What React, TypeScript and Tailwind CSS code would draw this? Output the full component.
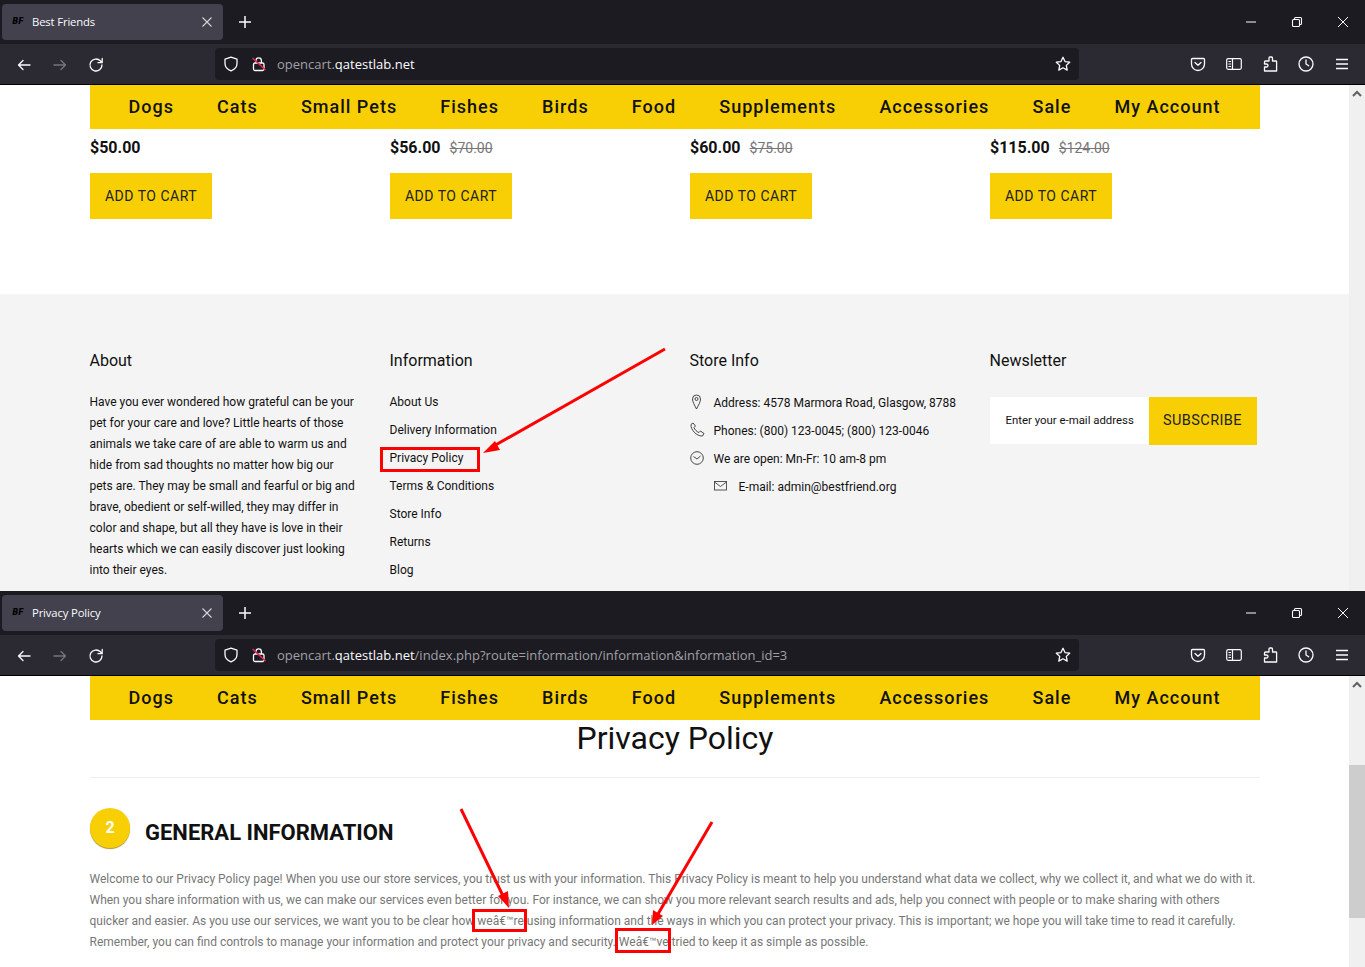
import React from "react";

const Y = "bg-[#f8cf05]";
const roboto = "font-['Roboto',sans-serif]";

function Favicon() {
  return (
    <span className="w-[16px] h-[16px] flex items-center justify-center font-['DejaVu_Sans',sans-serif] text-[8px] font-bold italic text-black tracking-[0px]">
      BF
    </span>
  );
}

function Win({ d, className = "" }: { d: string; className?: string }) {
  return (
    <svg width="16" height="16" viewBox="0 0 16 16" fill="none" stroke="#fbfbfe" strokeWidth="1.3" strokeLinecap="round" strokeLinejoin="round" className={className}>
      <path d={d} />
    </svg>
  );
}

function ChromeBar({ title, path }: { title: string; path?: React.ReactNode }) {
  return (
    <div className="shrink-0 h-[85px] flex flex-col border-b border-black font-['Open_Sans',sans-serif]">
      <div className="h-[44px] bg-[#1c1b22] flex items-center relative">
        <div className="ml-[2px] w-[221px] h-[36px] rounded-[4px] bg-[#42414d] flex items-center pl-[8px] pr-[8px] text-[#fbfbfe] text-[11.3px] tracking-[-0.15px]">
          <Favicon />
          <span className="ml-[6px] flex-1 pt-[1px]">{title}</span>
          <svg width="16" height="16" viewBox="0 0 16 16" fill="none" stroke="#d5d5d8" strokeWidth="1.1"><path d="M3.500 3.500l9 9M12.500 3.500l-9 9" /></svg>
        </div>
        <div className="ml-[14px]">
          <svg width="16" height="16" viewBox="0 0 16 16" fill="none" stroke="#fbfbfe" strokeWidth="1.5"><path d="M8 2v12M2 8h12" /></svg>
        </div>
        <div className="ml-auto flex items-center -mr-[1px]">
          <div className="w-[46px] flex justify-center">
            <svg width="12" height="12" viewBox="0 0 12 12" fill="none" stroke="#fbfbfe" strokeWidth="1"><path d="M1 6h10" /></svg>
          </div>
          <div className="w-[46px] flex justify-center">
            <svg width="12" height="12" viewBox="0 0 12 12" fill="none" stroke="#fbfbfe" strokeWidth="1.1"><rect x="1.5" y="3.5" width="7" height="7" rx="1" /><path d="M3.5 3.500V2.500a1 1 0 0 1 1-1h5a1 1 0 0 1 1 1v5a1 1 0 0 1-1 1h-1" /></svg>
          </div>
          <div className="w-[46px] flex justify-center">
            <svg width="12" height="12" viewBox="0 0 12 12" fill="none" stroke="#fbfbfe" strokeWidth="1"><path d="M1 1l10 10M11 1L1 11" /></svg>
          </div>
        </div>
      </div>
      <div className="h-[40px] bg-[#2b2a33] flex items-center">
        <div className="flex items-center gap-[20px] ml-[16px] w-[199px] pt-[1px]">
          <Win d="M14 8H2.500M7 3.500L2.500 8 7 12.500" />
          <svg width="16" height="16" viewBox="0 0 16 16" fill="none" stroke="#76757c" strokeWidth="1.3" strokeLinecap="round" strokeLinejoin="round"><path d="M2 8h11.500M9 3.500L13.500 8 9 12.500" /></svg>
          <Win d="M14 8a6 6 0 1 1-1.700-4.200L14 5.500M14.200 1.500v4.200H10" />
        </div>
        <div className="w-[864px] h-[32px] rounded-[4px] bg-[#1c1b22] flex items-center pl-[8px] pr-[8px]">
          <svg width="16" height="16" viewBox="0 0 16 16" fill="none" stroke="#fbfbfe" strokeWidth="1.3" strokeLinejoin="round"><path d="M8 1.200l6 2v4.300c0 3.600-2.600 6-6 7.300-3.400-1.300-6-3.700-6-7.300V3.200z" /></svg>
          <svg width="16" height="16" viewBox="0 0 16 16" fill="none" className="ml-[12px]">
            <rect x="2.500" y="7" width="10.500" height="7.500" rx="1.500" stroke="#fbfbfe" strokeWidth="1.300" />
            <path d="M5 7V4.500a2.700 2.700 0 0 1 5.400 0V7" stroke="#fbfbfe" strokeWidth="1.300" />
            <path d="M1.500 2l13 12" stroke="#e22850" strokeWidth="1.500" />
          </svg>
          <span className="ml-[10px] pt-[2px] text-[13px] text-[#a0a0a6] flex-1 whitespace-nowrap">
            opencart.<span className="text-[#fbfbfe]">qatestlab.net</span>{path}
          </span>
          <svg width="16" height="16" viewBox="0 0 16 16" fill="none" stroke="#fbfbfe" strokeWidth="1.300" strokeLinejoin="round"><path d="M8 1.300l2 4.300 4.700.6-3.400 3.200.9 4.700L8 11.800l-4.200 2.300.9-4.700L1.300 6.200l4.700-.6z" /></svg>
        </div>
        <div className="ml-auto flex items-center gap-[20px] pr-[15px]">
          <svg width="16" height="16" viewBox="0 0 16 16" fill="none" stroke="#fbfbfe" strokeWidth="1.300" strokeLinejoin="round" strokeLinecap="round"><path d="M2.500 2.500h11a1 1 0 0 1 1 1V8a6.500 6.500 0 0 1-13 0V3.500a1 1 0 0 1 1-1z" /><path d="M5 6.500L8 9.300l3-2.800" /></svg>
          <svg width="16" height="16" viewBox="0 0 16 16" fill="none" stroke="#fbfbfe" strokeWidth="1.200"><rect x="0.700" y="2.700" width="14.600" height="10.600" rx="1.500" /><path d="M6.500 2.700v10.600M2.500 5.500h2.500M2.500 8h2.500M2.500 10.500h2.500" /></svg>
          <svg width="16" height="16" viewBox="0 0 16 16" fill="none" stroke="#fbfbfe" strokeWidth="1.300" strokeLinejoin="round"><path d="M8 1h1.500A1.200 1.200 0 0 1 10.500 2.200V5H14a.6.6 0 0 1 .6.6V15H2.500v-4H4.500a1.500 1.500 0 0 0 0-3H2.500V6a1 1 0 0 1 1-1H7V2a1 1 0 0 1 1-1z" /></svg>
          <svg width="16" height="16" viewBox="0 0 16 16" fill="none" stroke="#fbfbfe" strokeWidth="1.300" strokeLinecap="round"><circle cx="8" cy="8" r="7" /><path d="M8 4v4l2.700 1.800" /></svg>
          <svg width="16" height="16" viewBox="0 0 16 16" fill="none" stroke="#fbfbfe" strokeWidth="1.300"><path d="M2 3.500h12M2 8h12M2 12.500h12" /></svg>
        </div>
      </div>
    </div>
  );
}

function Scrollbar({ thumb }: { thumb?: boolean }) {
  return (
    <div className="w-[16px] shrink-0 bg-[#f0f0f0] flex flex-col items-center">
      <div className="h-[17px] flex items-center justify-center">
        <svg width="10" height="7" viewBox="0 0 10 7" fill="none" stroke="#606060" strokeWidth="2"><path d="M1 6l4-4 4 4" /></svg>
      </div>
      {thumb && <div className="mt-[72px] w-full h-[153px] bg-[#cdcdcd]" />}
    </div>
  );
}

function Nav() {
  const items = ["Dogs", "Cats", "Small Pets", "Fishes", "Birds", "Food", "Supplements", "Accessories", "Sale", "My Account"];
  return (
    <div className={`${Y} shrink-0 h-[44px] w-[1170px] pl-[38.500px] pr-[39.500px] pb-[2px] flex items-center justify-between text-[18px] font-medium tracking-[1px] text-[#111] ${roboto}`}>
      {items.map((i) => (
        <span key={i} className="whitespace-nowrap">{i}</span>
      ))}
    </div>
  );
}

function Product({ price, old }: { price: string; old?: string }) {
  return (
    <div className="w-[300px]">
      <div className="h-[24px] flex items-center gap-[9px]">
        <span className="text-[16px] font-bold text-[#111]">{price}</span>
        {old && <span className="text-[14px] text-[#777] line-through">{old}</span>}
      </div>
      <div className={`${Y} mt-[13px] w-[122px] h-[46px] flex items-center justify-center text-[14px] tracking-[0.500px] text-[#222]`}>
        ADD TO CART
      </div>
    </div>
  );
}

function FooterHeading({ children }: { children: React.ReactNode }) {
  return <div className="text-[16px] h-[26px] leading-[26px] text-[#111]">{children}</div>;
}

const aboutLines = [
  "Have you ever wondered how grateful can be your",
  "pet for your care and love? Little hearts of those",
  "animals we take care of are able to warm us and",
  "hide from sad thoughts no matter how big our",
  "pets are. They may be small and fearful or big and",
  "brave, obedient or self-willed, they may differ in",
  "color and shape, but all they have is love in their",
  "hearts which we can easily discover just looking",
  "into their eyes.",
];

const links = ["About Us", "Delivery Information", "Privacy Policy", "Terms & Conditions", "Store Info", "Returns", "Blog"];

function Pin() {
  return (
    <svg width="13" height="16" viewBox="0 0 13 16" fill="none" stroke="#333" strokeWidth="0.900"><path d="M6.500 15C4.500 11 2.500 8 2.500 5a4 4 0 0 1 8 0c0 3-2 6-4 10z" /><circle cx="6.500" cy="5" r="1.500" /></svg>
  );
}
function Phone() {
  return (
    <svg width="15" height="15" viewBox="0 0 15 15" fill="none" stroke="#333" strokeWidth="0.900"><path d="M1 2.500L3 1l2.500 3-1.500 1.500c.5 2 3 4.500 5 5L10.500 9l3.500 2.500-1.500 2.500C7 14.500.5 8 1 2.500z" /></svg>
  );
}
function ClockI() {
  return (
    <svg width="14" height="14" viewBox="0 0 14 14" fill="none" stroke="#333" strokeWidth="0.900"><circle cx="7" cy="7" r="6.300" /><path d="M3.500 5.500L7 8l3.500-3" /></svg>
  );
}
function Mail() {
  return (
    <svg width="13" height="10" viewBox="0 0 13 10" fill="none" stroke="#444" strokeWidth="0.900"><rect x="0.500" y="0.500" width="12" height="8.500" /><path d="M0.500 1l6 4.500 6-4.500" /></svg>
  );
}

function Footer() {
  return (
    <div className="flex-1 bg-[#f4f4f4] pt-[54px] overflow-hidden">
      <div className="ml-[89.500px] flex w-[1170px] text-[12px] text-[#111]">
        <div className="w-[300px]">
          <FooterHeading>About</FooterHeading>
          <div className="mt-[18px] leading-[21px] whitespace-nowrap">
            {aboutLines.map((l) => (
              <div key={l}>{l}</div>
            ))}
          </div>
        </div>
        <div className="w-[300px]">
          <FooterHeading>Information</FooterHeading>
          <div className="mt-[14px]">
            {links.map((l) => (
              <div key={l} className="h-[28px] leading-[28px]">{l}</div>
            ))}
          </div>
        </div>
        <div className="w-[300px]">
          <FooterHeading>Store Info</FooterHeading>
          <div className="mt-[15px]">
            <div className="h-[28px] flex items-center"><span className="w-[24px] -mt-[3px]"><Pin /></span>Address: 4578 Marmora Road, Glasgow, 8788</div>
            <div className="h-[28px] flex items-center"><span className="w-[24px] -mt-[3px]"><Phone /></span>Phones: (800) 123-0045; (800) 123-0046</div>
            <div className="h-[28px] flex items-center"><span className="w-[24px] -mt-[3px]"><ClockI /></span>We are open: Mn-Fr: 10 am-8 pm</div>
            <div className="h-[28px] flex items-center pl-[24px]"><span className="w-[25px] -mt-[2px]"><Mail /></span>E-mail: admin@bestfriend.org</div>
          </div>
        </div>
        <div className="w-[270px]">
          <FooterHeading>Newsletter</FooterHeading>
          <div className="mt-[23px] flex w-[267px] h-[48px]">
            <div className="w-[159px] h-[47px] bg-white pl-[16px] flex items-center text-[11.400px] whitespace-nowrap">Enter your e-mail address</div>
            <div className={`${Y} w-[108px] flex items-center justify-center text-[14.500px] tracking-[0.400px] text-[#222]`}>SUBSCRIBE</div>
          </div>
        </div>
      </div>
    </div>
  );
}

const policy = [
  "Welcome to our Privacy Policy page! When you use our store services, you trust us with your information. This Privacy Policy is meant to help you understand what data we collect, why we collect it, and what we do with it.",
  "When you share information with us, we can make our services even better for you. For instance, we can show you more relevant search results and ads, help you connect with people or to make sharing with others",
  "quicker and easier. As you use our services, we want you to be clear how weâ€™re using information and the ways in which you can protect your privacy. This is important; we hope you will take time to read it carefully.",
  "Remember, you can find controls to manage your information and protect your privacy and security. Weâ€™ve tried to keep it as simple as possible.",
];

export default function App() {
  return (
    <div className={`relative w-[1365px] h-[967px] overflow-hidden bg-white ${roboto}`}>
      {/* First window */}
      <div className="h-[591px] flex flex-col">
        <ChromeBar title="Best Friends" />
        <div className="flex-1 flex min-h-0">
          <div className="flex-1 flex flex-col min-w-0">
            <div className="ml-[90px]"><Nav /></div>
            <div className="h-[165px] shrink-0 ml-[90px] pt-[7px] flex">
              <Product price="$50.00" />
              <Product price="$56.00" old="$70.00" />
              <Product price="$60.00" old="$75.00" />
              <Product price="$115.00" old="$124.00" />
            </div>
            <Footer />
          </div>
          <Scrollbar />
        </div>
      </div>

      {/* Second window */}
      <div className="h-[376px] flex flex-col">
        <ChromeBar title="Privacy Policy" path={<span className="text-[#a0a0a6]">/index.php?route=information/information&amp;information_id=3</span>} />
        <div className="flex-1 flex min-h-0">
          <div className="flex-1 min-w-0 overflow-hidden">
            <div className="ml-[90px] w-[1170px]">
              <Nav />
              <div className="h-[58px] text-center text-[32px] leading-[36px] text-[#111] border-b border-[#eeeeee]">Privacy Policy</div>
              <div className="mt-[30px] flex items-center h-[40px]">
                <div className={`${Y} w-[40px] h-[40px] rounded-full flex items-center justify-center text-white font-bold text-[16px] shadow-[0_1px_1px_rgba(150,120,0,0.8)]`}>2</div>
                <div className="ml-[15px] pt-[8px] text-[22px] font-bold text-[#111] whitespace-nowrap">GENERAL INFORMATION</div>
              </div>
              <div className="mt-[21px] -ml-[0.500px] text-[12px] leading-[21px] text-[#777] whitespace-nowrap">
                {policy.map((l) => (
                  <div key={l}>{l}</div>
                ))}
              </div>
            </div>
          </div>
          <Scrollbar thumb />
        </div>
      </div>

      {/* Red annotations */}
      <svg className="absolute inset-0 pointer-events-none" width="1365" height="967" fill="none">
        <rect x="381.500" y="448.500" width="97" height="22" stroke="#ff0000" strokeWidth="3" />
        <rect x="473.500" y="910.500" width="52" height="20" stroke="#ff0000" strokeWidth="3" />
        <rect x="616.500" y="929.500" width="53" height="22" stroke="#ff0000" strokeWidth="3" />
        <path d="M665 349L492 447" stroke="#ff0000" strokeWidth="3" />
        <path d="M483 453L495 441L500 450Z" fill="#ff0000" />
        <path d="M461 809L504 898" stroke="#ff0000" strokeWidth="3" />
        <path d="M509 908L498 896L508 891Z" fill="#ff0000" />
        <path d="M712 822L658 914" stroke="#ff0000" strokeWidth="3" />
        <path d="M652 925L653 910L663 916Z" fill="#ff0000" />
      </svg>
    </div>
  );
}
